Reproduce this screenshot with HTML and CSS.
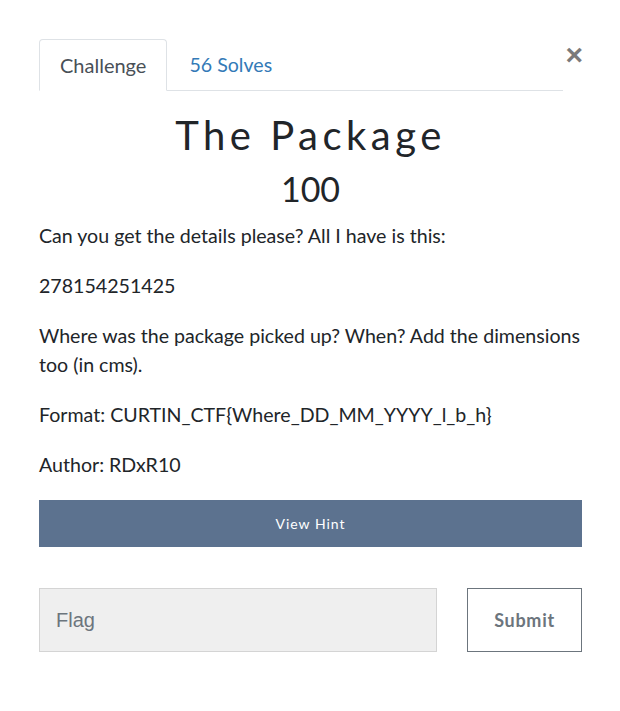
FILE: index.html
```html
<!DOCTYPE html>
<html lang="en">
<head>
<meta charset="utf-8">
<title>The Package</title>
<link rel="stylesheet" href="styles.css">
</head>
<body>
<div class="modal">
  <div class="header">
    <ul class="tabs">
      <li class="tab active">Challenge</li>
      <li class="tab link">56 Solves</li>
    </ul>
    <button class="close" aria-label="Close">&times;</button>
  </div>
  <h2 class="title">The Package</h2>
  <h3 class="value">100</h3>
  <div class="desc">
    <p>Can you get the details please? All I have is this:</p>
    <p>278154251425</p>
    <p>Where was the package picked up? When? Add the dimensions too (in cms).</p>
    <p>Format: CURTIN_CTF{Where_DD_MM_YYYY_l_b_h}</p>
    <p>Author: RDxR10</p>
  </div>
  <button class="hint">View Hint</button>
  <div class="submit-row">
    <input class="flag" type="text" placeholder="Flag">
    <button class="submit">Submit</button>
  </div>
</div>
</body>
</html>
```

FILE: styles.css
```css
html, body {
  margin: 0;
  padding: 0;
  background: #ffffff;
}
body {
  font-family: Lato, "Open Sans", sans-serif;
  color: #212529;
}
.modal {
  width: 543px;
  padding: 39px 0 0 39px;
}
.header {
  display: flex;
  align-items: flex-start;
}
.tabs {
  list-style: none;
  margin: 0;
  padding: 0;
  display: flex;
  width: 524px;
  border-bottom: 1px solid #dee2e6;
}
.tab {
  font-size: 20px;
  line-height: 28px;
  padding: 11px 20px 11px 20px;
  border: 1px solid transparent;
  border-radius: 4px 4px 0 0;
  margin-bottom: -1px;
}
.tab.active {
  color: #495057;
  border-color: #dee2e6 #dee2e6 #ffffff;
  background: #ffffff;
}
.tab.link {
  color: #337ab7;
  padding-left: 21px;
  font-size: 19.6px;
}
.close {
  margin-left: auto;
  background: none;
  border: none;
  padding: 0;
  font-family: "Liberation Sans", Arial, sans-serif;
  font-size: 30px;
  font-weight: 700;
  line-height: 30px;
  color: #7a7a7a;
  margin-top: 1px;
  margin-right: -1px;
}
.title {
  font-family: Lato, sans-serif;
  font-weight: 400;
  font-size: 40px;
  letter-spacing: 4.5px;
  line-height: 48px;
  text-align: center;
  margin: 20px 0 0 0;
  color: #212529;
}
.value {
  font-family: Lato, sans-serif;
  font-weight: 400;
  font-size: 34px;
  line-height: 40px;
  text-align: center;
  margin: 10px 0 0 0;
}
.desc {
  margin-top: 12px;
  font-size: 19.6px;
  line-height: 29px;
  color: #212529;
}
.desc p {
  margin: 0 0 21px 0;
}
.hint {
  display: block;
  width: 543px;
  height: 47px;
  margin-top: 3px;
  border: none;
  background: #5c728f;
  color: #ffffff;
  font-family: Lato, sans-serif;
  font-size: 14px;
  letter-spacing: 1px;
}
.submit-row {
  display: flex;
  justify-content: space-between;
  margin-top: 41px;
}
.flag {
  box-sizing: border-box;
  width: 398px;
  height: 64px;
  background: #efefef;
  border: 1px solid #d4d4d4;
  padding: 0 16px;
  font-family: "Liberation Sans", Arial, sans-serif;
  font-size: 20px;
  color: #495057;
}
.flag::placeholder {
  color: #6c757d;
}
.submit {
  box-sizing: border-box;
  width: 115px;
  height: 64px;
  background: #ffffff;
  border: 1px solid #6c757d;
  font-family: Lato, sans-serif;
  font-weight: 700;
  font-size: 18px;
  letter-spacing: 0.7px;
  color: #6c757d;
}
```
